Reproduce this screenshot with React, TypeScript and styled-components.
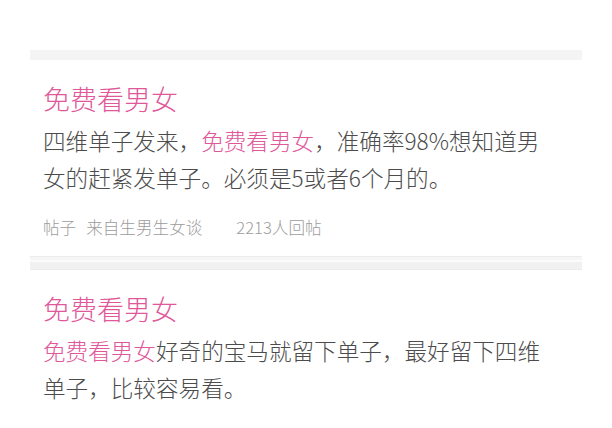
import React from "react";
import styled, { createGlobalStyle } from "styled-components";

const GlobalStyle = createGlobalStyle`
  html, body {
    margin: 0;
    padding: 0;
    background: #ffffff;
  }
  body {
    font-family: "Noto Sans CJK SC", "Noto Sans", sans-serif;
    -webkit-font-smoothing: antialiased;
  }
`;

const Page = styled.div`
  width: 612px;
  height: 428px;
  overflow: hidden;
  padding-top: 50px;
  box-sizing: border-box;
`;

const List = styled.div`
  margin: 0 30px;
  display: flex;
  flex-direction: column;
`;

const Divider = styled.div<{ $double?: boolean }>`
  height: ${({ $double }) => ($double ? "14px" : "10px")};
  background: ${({ $double }) =>
    $double
      ? "linear-gradient(#ececec 0, #ececec 1px, #f6f6f6 1px, #f6f6f6 4px, #fbfbfb 4px, #fbfbfb 6px, #f1f1f1 6px, #f1f1f1 13px, #ececec 13px)"
      : "#f4f4f4"};
`;

const Card = styled.div`
  padding: 20px 13px 17px;
  display: flex;
  flex-direction: column;
`;

const Title = styled.h2`
  margin: 0;
  font-size: 27px;
  line-height: 38px;
  font-weight: 300;
  color: #e0579a;
`;

const Body = styled.p`
  margin: 4px 0 0;
  max-width: 510px;
  font-size: 22.6px;
  line-height: 37px;
  font-weight: 300;
  color: #4c4c4c;
`;

const Highlight = styled.span`
  color: #e0579a;
`;

const Meta = styled.div`
  margin-top: 19px;
  display: flex;
  gap: 10px;
  font-size: 16.6px;
  line-height: 24px;
  font-weight: 300;
  color: #9c9c9c;
`;

const Replies = styled.span`
  margin-left: 24px;
`;

interface Post {
  title: string;
  body: React.ReactNode;
  type: string;
  from: string;
  replies: number;
}

const posts: Post[] = [
  {
    title: "免费看男女",
    body: (
      <>
        四维单子发来，<Highlight>免费看男女</Highlight>，准确率98%想知道男女的赶紧发单子。必须是5或者6个月的。
      </>
    ),
    type: "帖子",
    from: "来自生男生女谈",
    replies: 2213,
  },
  {
    title: "免费看男女",
    body: (
      <>
        <Highlight>免费看男女</Highlight>好奇的宝马就留下单子，最好留下四维单子，比较容易看。
      </>
    ),
    type: "帖子",
    from: "来自生男生女谈",
    replies: 1865,
  },
];

export default function App() {
  return (
    <>
      <GlobalStyle />
      <Page>
        <List>
          {posts.map((post, i) => (
            <React.Fragment key={i}>
              <Divider $double={i > 0} />
              <Card>
                <Title>{post.title}</Title>
                <Body>{post.body}</Body>
                <Meta>
                  <span>{post.type}</span>
                  <span>{post.from}</span>
                  <Replies>{post.replies}人回帖</Replies>
                </Meta>
              </Card>
            </React.Fragment>
          ))}
        </List>
      </Page>
    </>
  );
}
